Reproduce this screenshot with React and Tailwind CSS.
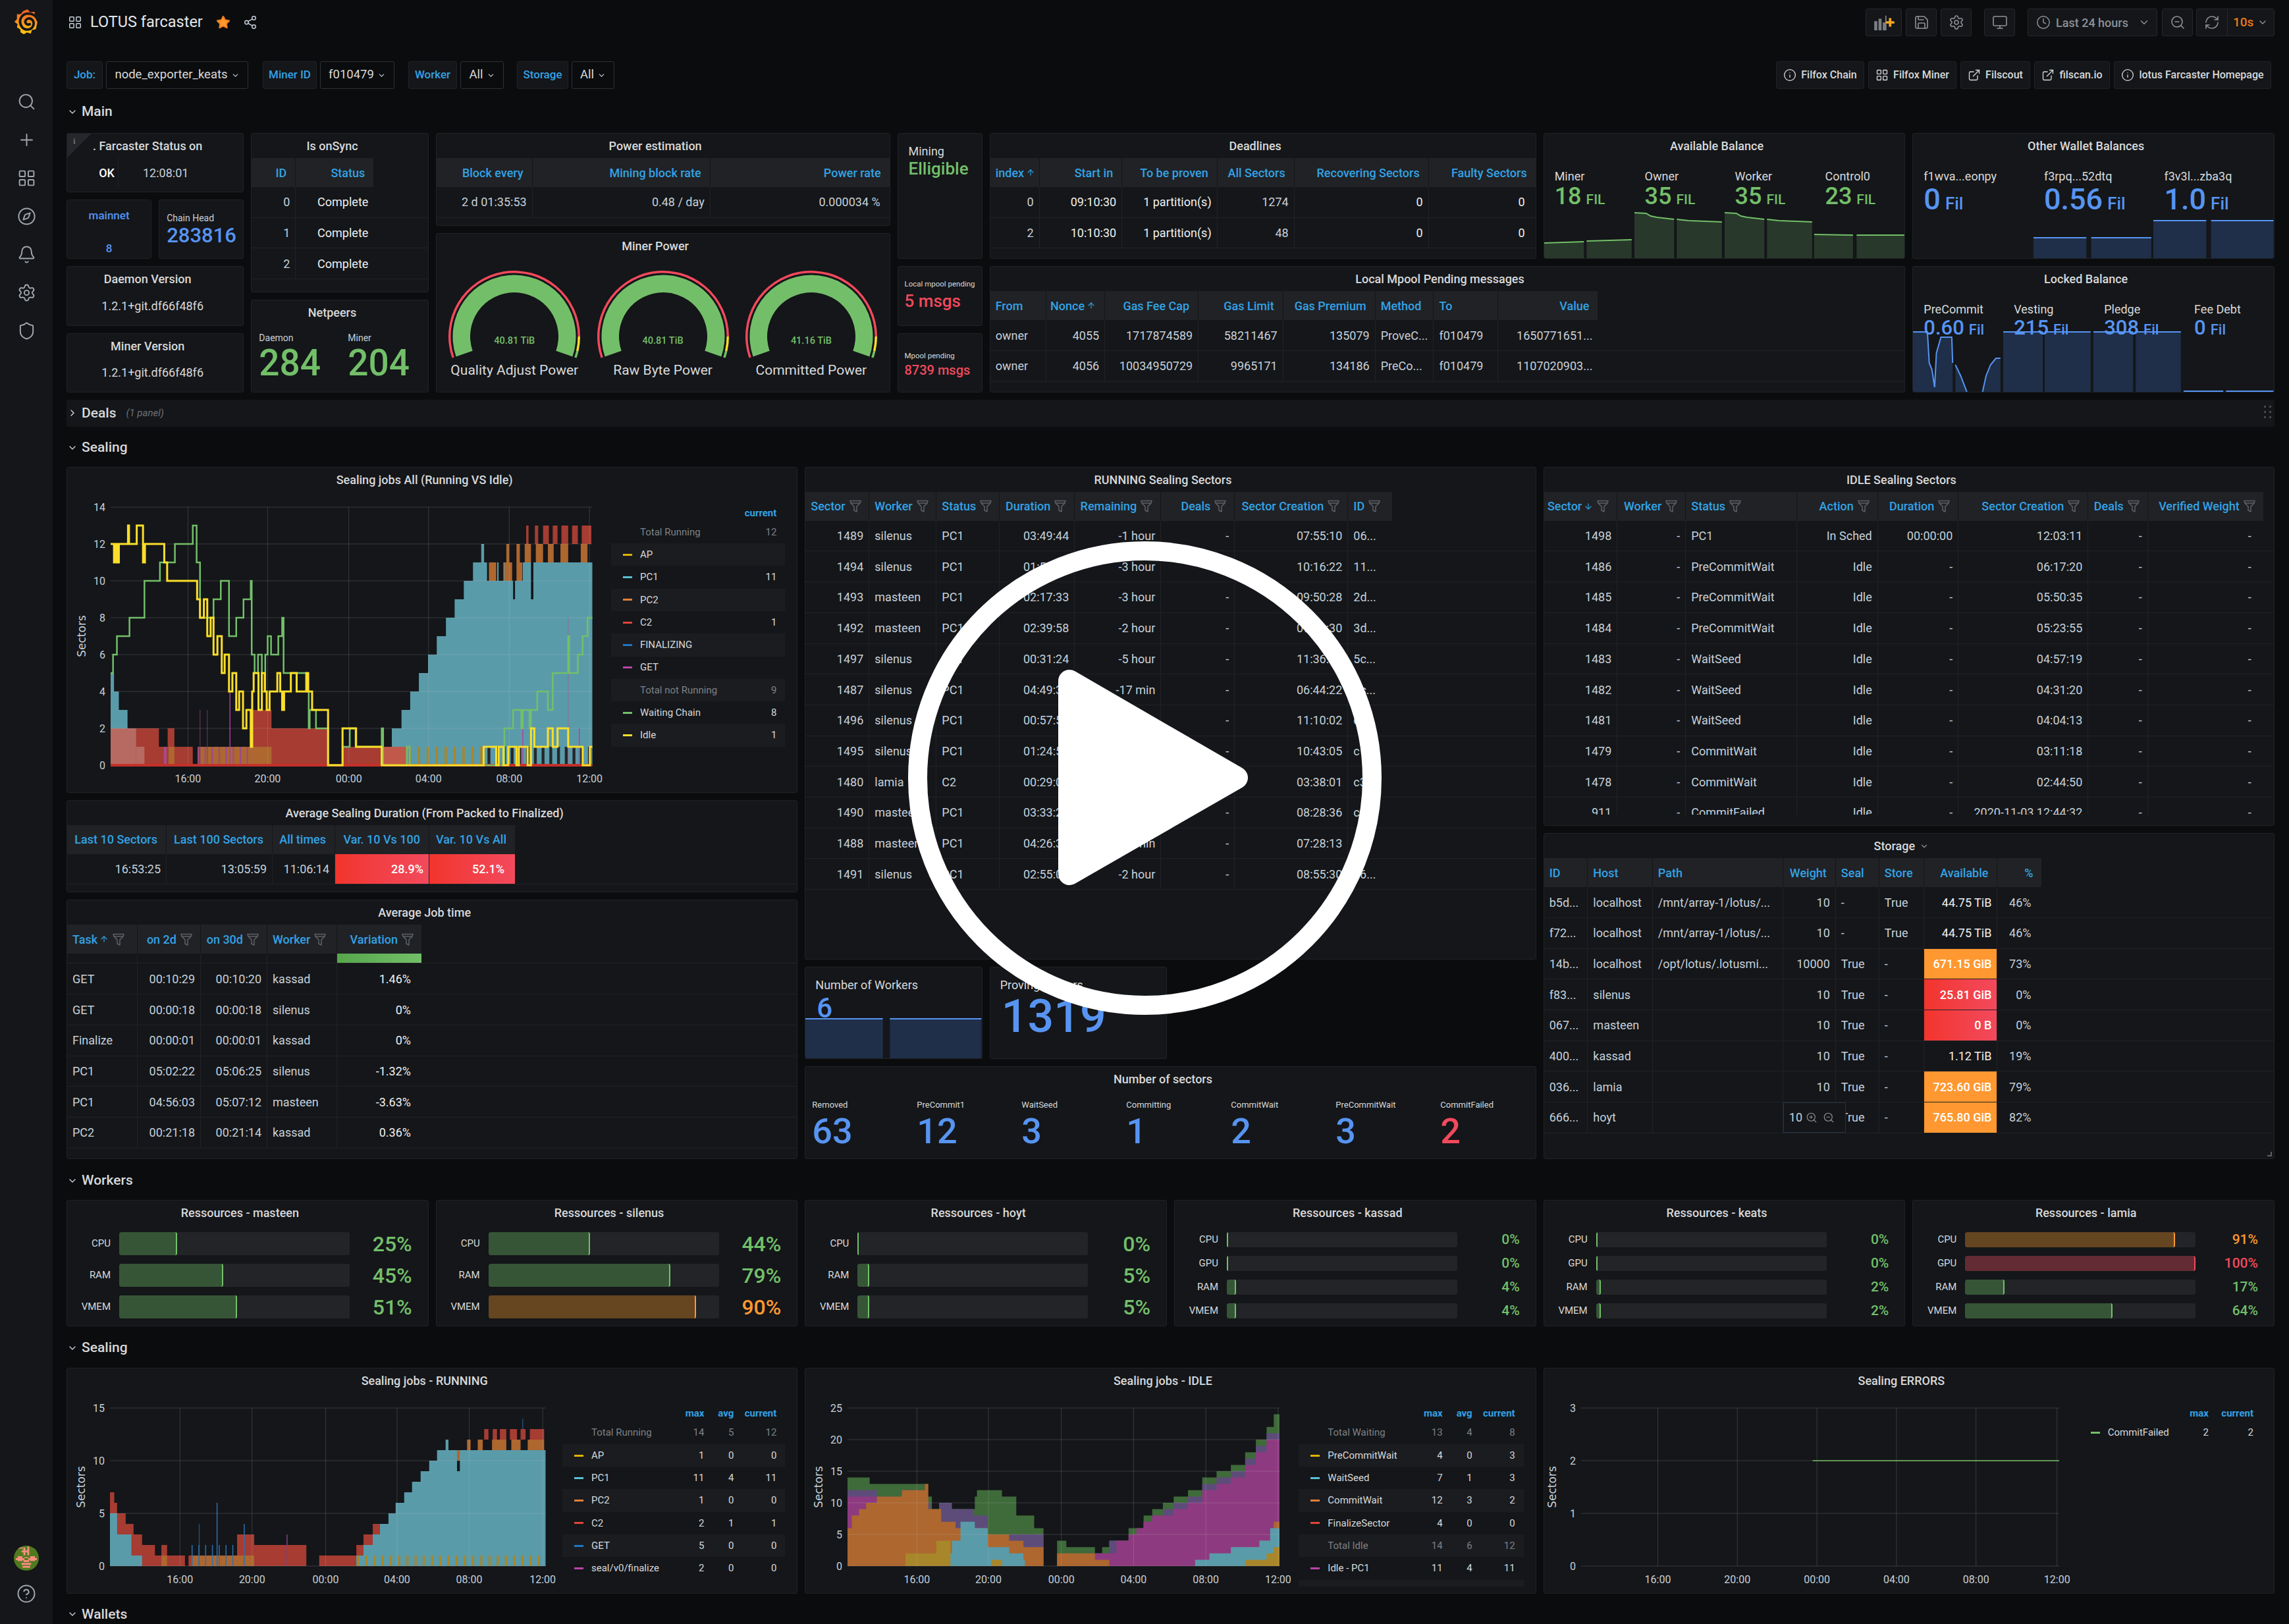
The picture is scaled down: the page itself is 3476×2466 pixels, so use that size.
import React from "react";
import { Search, Plus, LayoutGrid, Compass, Bell, Settings, Shield, CircleHelp, Star, Share2, Save, Monitor, Clock, ZoomOut, ZoomIn, RefreshCw, ChevronDown, ChevronRight, Info, ExternalLink, ArrowUp, ArrowDown } from "lucide-react";

const BLUE = "#5794f2", GREEN = "#73bf69", RED = "#f2495c", ORANGE = "#ff9830";

function Logo() {
  return (
    <svg width="40" height="42" viewBox="16 12 42 42">
      <defs>
        <linearGradient id="lg" x1="0" y1="0" x2="0" y2="1">
          <stop offset="0" stopColor="#f05a28" />
          <stop offset="1" stopColor="#fbca0a" />
        </linearGradient>
      </defs>
      <polygon fill="url(#lg)" points="39,13 43,18 50,17 51,23 56,27 55,33 53.5,39 52,45 46,46 44,52 38,50 33,53 28,50 27,45 22,42 23,37 18,33 22,29 22,21 28,21 32,16" />
      <path d="M56 32 C53 23 46 19.5 39 20 C31 20.5 26.5 27 27 33.5 C27.5 41 33 46 39.5 45.5 C45.5 45 49.5 40 48.5 34 C47.5 29 43 27 39.5 28 C36 29 34.5 32.5 36 35 C37.5 37.5 40.5 38 42.5 37" fill="none" stroke="#141619" strokeWidth="4" strokeLinecap="round" />
    </svg>
  );
}

function Avatar() {
  const blocks = [[4,0,2,2],[14,0,2,2],[10,1,2,8],[14,2,2,7],[6,1,4,1],[8,4,7,2],[1,1,2,2],[22,1,2,2],[4,10,5,5],[17,10,5,5],[9,12,2,2],[15,12,2,2],[11,11,4,1],[10,14,6,2],[2,12,4,2],[20,12,4,2],[8,17,10,2],[9,20,8,2]];
  return (
    <svg width="38" height="38" viewBox="0 0 26 26">
      <defs><clipPath id="av"><circle cx="13" cy="13" r="13" /></clipPath></defs>
      <g clipPath="url(#av)">
        <rect width="26" height="26" fill="#4f7a1e" />
        {blocks.map((b, i) => <rect key={i} x={b[0]} y={b[1] + 1} width={b[2]} height={b[3]} fill="#fb8e80" />)}
      </g>
    </svg>
  );
}

function Sidebar() {
  const icons = [Search, Plus, LayoutGrid, Compass, Bell, Settings, Shield];
  return (
    <div className="w-[80px] shrink-0 bg-[#141619] flex flex-col items-center h-full">
      <div className="h-[125px] w-full flex justify-center pt-[12px] items-start"><Logo /></div>
      {icons.map((I, i) => (
        <div key={i} className="h-[58px] flex items-center justify-center text-[#a2a6ad]"><I size={29} strokeWidth={1.6} /></div>
      ))}
      <div className="mt-auto flex flex-col items-center gap-[20px] pb-[31px]">
        <Avatar />
        <CircleHelp size={30} strokeWidth={1.6} className="text-[#a2a6ad]" />
      </div>
    </div>
  );
}

function TBtn({ className, children }) {
  return <div className={"h-[42px] bg-[#141619] border border-[#25272c] rounded-[3px] flex items-center justify-center text-[#8e9196] " + className}>{children}</div>;
}

function TopBar() {
  return (
    <div className="h-[68px] flex items-center shrink-0">
      <div className="flex items-center pl-[2px]">
        <LayoutGrid size={22} strokeWidth={1.6} className="text-[#c7d0d9]" />
        <span className="ml-[12px] text-[23.5px] text-[#e4e6e8]">LOTUS farcaster</span>
        <Star size={22} fill={ORANGE} stroke="#eb7b18" className="ml-[20px]" />
        <Share2 size={22} strokeWidth={1.6} className="ml-[19px] text-[#c7d0d9]" />
      </div>
      <div className="ml-auto flex items-center">
        <TBtn className="w-[55px]">
          <svg width="32" height="26" viewBox="0 0 34 28">
            <rect x="1" y="12" width="5" height="15" fill="#7b7e83" /><rect x="8" y="8" width="5" height="19" fill="#7b7e83" /><rect x="15" y="14" width="5" height="13" fill="#7b7e83" /><rect x="19" y="3" width="2" height="24" fill="#7b7e83" />
            <path d="M25 7h4v5h5v4h-5v5h-4v-5h-5v-4h5z" fill="#f5a623" />
          </svg>
        </TBtn>
        <TBtn className="w-[47px] ml-[6px]"><Save size={24} strokeWidth={1.6} /></TBtn>
        <TBtn className="w-[47px] ml-[6px]"><Settings size={24} strokeWidth={1.6} /></TBtn>
        <TBtn className="w-[47px] ml-[19px]"><Monitor size={24} strokeWidth={1.6} /></TBtn>
        <TBtn className="w-[197px] ml-[19px] text-[18px] font-medium justify-start pl-[12px]">
          <Clock size={22} strokeWidth={1.6} /><span className="ml-[8px]">Last 24 hours</span><ChevronDown size={18} className="ml-auto mr-[10px]" />
        </TBtn>
        <TBtn className="w-[47px] ml-[7px]"><ZoomOut size={24} strokeWidth={1.6} /></TBtn>
        <div className="ml-[5px] w-[119px] h-[42px] bg-[#141619] border border-[#25272c] rounded-[3px] flex items-center text-[#8e9196]">
          <div className="w-[47px] h-full flex items-center justify-center border-r border-[#25272c]"><RefreshCw size={24} strokeWidth={1.6} /></div>
          <span className="ml-[8px] text-[19px] font-medium text-[#eb7b18]">10s</span><ChevronDown size={16} className="ml-[6px]" />
        </div>
      </div>
    </div>
  );
}

function VarL({ w, children }) {
  return <div className={"h-[42px] bg-[#141619] border border-[#202226] rounded-[3px] flex items-center justify-center text-[#33a2e5] text-[17px] font-medium " + w}>{children}</div>;
}
function VarV({ w, children }) {
  return <div className={"h-[42px] ml-[5px] bg-[#0b0c0e] border border-[#2c3235] rounded-[3px] flex items-center justify-center text-[#d8d9da] text-[18.5px] gap-[5px] " + w}>{children}<ChevronDown size={13} className="text-[#c7d0d9]" /></div>;
}
function LinkBtn({ w, icon: I, children }) {
  return <div className={"h-[42px] ml-[6px] bg-[#141619] border border-[#202226] rounded-[3px] flex items-center justify-center gap-[7px] text-[16px] font-medium text-[#d8d9da] " + w}><I size={20} strokeWidth={1.6} />{children}</div>;
}
function Vars() {
  return (
    <div className="flex items-center h-[42px] mt-[25px] shrink-0">
      <VarL w="w-[55px]">Job:</VarL><VarV w="w-[216px]">node_exporter_keats</VarV>
      <VarL w="w-[82px] ml-[22px]">Miner ID</VarL><VarV w="w-[113px]">f010479</VarV>
      <VarL w="w-[74px] ml-[21px]">Worker</VarL><VarV w="w-[66px]">All</VarV>
      <VarL w="w-[78px] ml-[20px]">Storage</VarL><VarV w="w-[65px]">All</VarV>
      <div className="ml-auto flex items-center pr-[5px]">
        <LinkBtn w="w-[134px]" icon={Info}>Filfox Chain</LinkBtn>
        <LinkBtn w="w-[134px]" icon={LayoutGrid}>Filfox Miner</LinkBtn>
        <LinkBtn w="w-[106px]" icon={ExternalLink}>Filscout</LinkBtn>
        <LinkBtn w="w-[115px]" icon={ExternalLink}>filscan.io</LinkBtn>
        <LinkBtn w="w-[239px]" icon={Info}>lotus Farcaster Homepage</LinkBtn>
      </div>
    </div>
  );
}

function Section({ h, children }) {
  return (
    <div className={"flex items-center gap-[6px] pl-[1px] text-[21px] font-medium text-[#d8d9da] shrink-0 pt-[3px] " + h}>
      <ChevronDown size={16} strokeWidth={2} className="text-[#c7d0d9]" />{children}
    </div>
  );
}

function Panel({ pos, title, children, className = "" }) {
  return (
    <div className={"bg-[#141619] border border-[#202226] rounded-[3px] overflow-hidden flex flex-col relative min-w-0 " + pos + " " + className}>
      {title && <div className="h-[37px] shrink-0 flex items-center justify-center pr-[23px] text-[18px] font-medium text-[#d8d9da] whitespace-nowrap">{title}</div>}
      {children}
    </div>
  );
}

function Funnel() {
  return (
    <svg width="18" height="19" viewBox="0 0 18 19" className="shrink-0 ml-[6px]" fill="none" stroke="#5d6066" strokeWidth="1.5" strokeLinejoin="round">
      <path d="M1 1.5h16l-1 3.5-5 5v8l-4-2v-6L2 5z" /><path d="M2 5h14" />
    </svg>
  );
}

function Tbl({ cols, head, rows, filter, gauge, clip }) {
  const alignC = (a) => (a === "r" ? "justify-end" : "justify-start");
  const headPad = (a) => (a === "r" ? (filter ? "pl-[8px] pr-[12px]" : "pl-[8px] pr-[13px]") : "px-[8px]");
  return (
    <div className={"flex flex-col min-h-0 " + (clip ? "flex-1 mb-[16px] overflow-hidden" : "")}>
      <div className="flex h-[44px] shrink-0">
        {head.map((h, i) => (
          <div key={i} style={{ width: cols[i] }} className={"bg-[#202226] border-r border-[#141619] last:border-r-0 flex items-center text-[18px] font-medium text-[#33a2e5] whitespace-nowrap overflow-hidden shrink-0 " + headPad(h.a) + " " + alignC(h.a)}>
            {h.t}{h.s === "up" && <ArrowUp size={14} strokeWidth={2} className="ml-[3px] shrink-0" />}{h.s === "down" && <ArrowDown size={14} strokeWidth={2} className="ml-[3px] shrink-0" />}{filter && <Funnel />}
          </div>
        ))}
      </div>
      {gauge && (
        <div className="flex h-[15px] shrink-0 border-b border-[#202226]">
          {head.map((h, i) => (
            <div key={i} style={{ width: cols[i] }} className={"shrink-0 border-r border-[#202226] last:border-r-0 " + (i === head.length - 1 ? "bg-linear-to-r from-[#56a64b] to-[#73bf69]" : "")} />
          ))}
        </div>
      )}
      {rows.map((r, ri) => (
        <div key={ri} className="flex h-[46.7px] shrink-0 border-b border-[#202226]">
          {r.map((c, i) => {
            const o = typeof c === "string" ? { t: c } : c;
            const a = head[i].ca || head[i].a;
            const k = o.k === "hi" ? "text-[#f0f0f0]" : o.k === "red" ? "text-white font-medium bg-linear-to-r from-[#f2342b] to-[#f2495c]" : o.k === "or" ? "text-white font-medium bg-[#ff9830]" : "text-[#c7d0d9]";
            return (
              <div key={i} style={{ width: cols[i] }} className={"relative shrink-0 border-r border-[#202226] last:border-r-0 flex items-center pl-[8px] whitespace-nowrap text-[18px] " + (head[i].p || "pr-[8px]") + " " + alignC(a) + " " + k}>
                {o.hover ? (
                  <div className="absolute left-0 top-0 h-full w-[95px] z-10 bg-[#141619] border border-[#253247] flex items-center pl-[8px] gap-[5px] text-[#c7d0d9]">
                    {o.t}<ZoomIn size={18} strokeWidth={1.5} className="text-[#8e9196]" /><ZoomOut size={18} strokeWidth={1.5} className="ml-[3px] text-[#8e9196]" />
                  </div>
                ) : <span>{o.t}</span>}
              </div>
            );
          })}
        </div>
      ))}
    </div>
  );
}

const R = (t, s, p) => ({ t, a: "r", s, p });
const L = (t, s, ca) => ({ t, a: "l", s, ca });
const H = (t) => ({ t, k: "hi" });

function Spark({ h, blocks, c = "blue" }) {
  const fill = c === "blue" ? "#1f2f4a" : "#28392b";
  const line = c === "blue" ? BLUE : GREEN;
  return (
    <svg viewBox={`0 0 100 ${h}`} preserveAspectRatio="none" className="absolute left-0 bottom-0 w-full" style={{ height: h }}>
      {blocks.map((b, i) => (
        <g key={i}>
          <polygon fill={fill} points={`${b[0][0]},${h} ` + b.map((p) => `${p[0]},${h - p[1]}`).join(" ") + ` ${b[b.length - 1][0]},${h}`} />
          <polyline fill="none" stroke={line} strokeWidth="2" vectorEffect="non-scaling-stroke" points={b.map((p) => `${p[0]},${h - p[1]}`).join(" ")} />
        </g>
      ))}
    </svg>
  );
}

function Stat({ label, value, unit, vc, uc, vh, spark }) {
  return (
    <div className="flex-1 relative min-w-0 pt-[16px] pl-[16px]">
      {spark}
      <div className="relative h-[22px] flex items-center text-[18px] text-[#d8d9da] whitespace-nowrap">{label}</div>
      <div className={"relative flex items-baseline font-medium whitespace-nowrap " + vh + " " + vc}>{value}<span className={"ml-[7px] " + uc}>{unit}</span></div>
    </div>
  );
}

function Gauge({ label, value }) {
  const cx = 112, cy = 112;
  const pt = (r, a) => [cx + r * Math.cos((a * Math.PI) / 180), cy + r * Math.sin((a * Math.PI) / 180)];
  const arc = (r0, r1, a0, a1) => {
    const [x0, y0] = pt(r1, a0), [x1, y1] = pt(r1, a1), [x2, y2] = pt(r0, a1), [x3, y3] = pt(r0, a0);
    const lg = a1 - a0 > 180 ? 1 : 0;
    return `M${x0} ${y0}A${r1} ${r1} 0 ${lg} 1 ${x1} ${y1}L${x2} ${y2}A${r0} ${r0} 0 ${lg} 0 ${x3} ${y3}Z`;
  };
  return (
    <div className="flex-1 flex flex-col items-center min-w-0">
      <div className="relative w-[224px] h-[157px] shrink-0">
        <svg width="224" height="157" viewBox="0 0 224 157">
          <path d={arc(67, 93.5, 161, 379)} fill={GREEN} />
          <path d={arc(96.5, 100, 161, 360)} fill={RED} />
          <path d={arc(96.5, 100, 360, 373)} fill="#fade2a" />
          <path d={arc(96.5, 100, 373, 379)} fill={GREEN} />
        </svg>
        <div className="absolute left-0 right-0 top-[108px] text-center text-[14.5px] font-medium text-[#73bf69]">{value}</div>
      </div>
      <div className="text-[21px] text-[#d8d9da] whitespace-nowrap mt-[-9px]">{label}</div>
    </div>
  );
}

function Main() {
  return (
    <div className="grid grid-cols-24 auto-rows-[39.6px] gap-[11px] shrink-0">
      <Panel pos="col-start-1 col-span-2 row-start-1 row-span-2" title=". Farcaster Status on">
        <div className="absolute left-0 top-0 w-[36px] h-[37px] bg-[linear-gradient(135deg,#25272c_50%,transparent_50%)] text-[13px] text-[#8e9196] pl-[9px] pt-[1px] font-serif">i</div>
        <div className="flex h-[44px] items-center text-[18px]">
          <div className="w-[78px] h-full flex items-center justify-end pr-[5px] border-r border-[#202226] text-white font-medium">OK</div>
          <div className="flex-1 pl-[37px] text-[#c7d0d9]">12:08:01</div>
        </div>
      </Panel>
      <Panel pos="col-start-1 col-span-1 row-start-3 row-span-2" className="items-center text-[#5794f2] font-medium text-[17px]">
        <div className="mt-[11px]">mainnet</div>
        <div className="mt-[24px]">8</div>
      </Panel>
      <Panel pos="col-start-2 col-span-1 row-start-3 row-span-2" className="pl-[11px]">
        <div className="mt-[17px] text-[14px] text-[#c7d0d9] whitespace-nowrap">Chain Head</div>
        <div className="mt-[-2px] text-[31px] font-medium leading-[36px] text-[#5794f2]">283816</div>
      </Panel>
      <Panel pos="col-start-1 col-span-2 row-start-5 row-span-2" title="Daemon Version">
        <div className="h-[44px] flex items-center justify-center text-[18px] text-[#d8d9da] pr-[8px]">1.2.1+git.df66f48f6</div>
      </Panel>
      <Panel pos="col-start-1 col-span-2 row-start-7 row-span-2" title="Miner Version">
        <div className="h-[44px] flex items-center justify-center text-[18px] text-[#d8d9da] pr-[8px]">1.2.1+git.df66f48f6</div>
      </Panel>
      <Panel pos="col-start-3 col-span-2 row-start-1 row-span-5" title="Is onSync">
        <Tbl cols={[67, 118]} head={[R("ID"), R("Status")]} rows={[["0", H("Complete")], ["1", H("Complete")], ["2", H("Complete")]]} />
      </Panel>
      <Panel pos="col-start-3 col-span-2 row-start-6 row-span-3" title="Netpeers">
        <div className="flex pl-[11px] mt-[10px]">
          <div className="w-[135px]"><div className="text-[14px] leading-[20px] text-[#c7d0d9]">Daemon</div><div className="text-[55px] leading-[60px] font-medium text-[#73bf69] mt-[-2px]">284</div></div>
          <div><div className="text-[14px] leading-[20px] text-[#c7d0d9]">Miner</div><div className="text-[55px] leading-[60px] font-medium text-[#73bf69] mt-[-2px]">204</div></div>
        </div>
      </Panel>
      <Panel pos="col-start-5 col-span-5 row-start-1 row-span-3" title="Power estimation">
        <Tbl cols={[146, 270, 272]} head={[R("Block every"), R("Mining block rate"), R("Power rate", null, "pr-[14px]")]} rows={[["2 d 01:35:53", "0.48 / day", "0.000034 %"]]} />
      </Panel>
      <Panel pos="col-start-5 col-span-5 row-start-4 row-span-5" title="Miner Power">
        <div className="flex px-[6px] pt-[7px]">
          <Gauge label="Quality Adjust Power" value="40.81 TiB" />
          <Gauge label="Raw Byte Power" value="40.81 TiB" />
          <Gauge label="Committed Power" value="41.16 TiB" />
        </div>
      </Panel>
      <Panel pos="col-start-10 col-span-1 row-start-1 row-span-4" className="pl-[16px] pt-[15px]">
        <div className="text-[18px] leading-[24px] text-[#d8d9da]">Mining</div>
        <div className="text-[26px] leading-[28px] font-medium text-[#73bf69]">Elligible</div>
      </Panel>
      <Panel pos="col-start-10 col-span-1 row-start-5 row-span-2" className="pl-[10px] pt-[18px]">
        <div className="text-[11.5px] leading-[16px] text-[#d8d9da] whitespace-nowrap">Local mpool pending</div>
        <div className="text-[26px] leading-[34px] font-medium text-[#f2495c] whitespace-nowrap mt-[1px]">5 msgs</div>
      </Panel>
      <Panel pos="col-start-10 col-span-1 row-start-7 row-span-2" className="pl-[10px] pt-[25px]">
        <div className="text-[11.5px] leading-[16px] text-[#d8d9da] whitespace-nowrap">Mpool pending</div>
        <div className="text-[20px] leading-[28px] font-medium text-[#f2495c] whitespace-nowrap">8739 msgs</div>
      </Panel>
      <Panel pos="col-start-11 col-span-6 row-start-1 row-span-4" title="Deadlines">
        <Tbl cols={[75, 125.5, 144.5, 117, 204, 162]} head={[L("index", "up", "r"), R("Start in"), R("To be proven"), R("All Sectors"), R("Recovering Sectors"), R("Faulty Sectors", null, "pr-[16px]")]}
          rows={[["0", H("09:10:30"), H("1 partition(s)"), "1274", H("0"), H("0")], ["2", H("10:10:30"), H("1 partition(s)"), "48", H("0"), H("0")]]} />
      </Panel>
      <Panel pos="col-start-11 col-span-10 row-start-5 row-span-4" title="Local Mpool Pending messages">
        <Tbl cols={[85.7, 88.8, 142, 128.5, 140, 88.8, 98, 151]} head={[L("From"), R("Nonce", "up"), R("Gas Fee Cap"), R("Gas Limit"), R("Gas Premium"), L("Method"), L("To"), R("Value")]}
          rows={[["owner", "4055", "1717874589", "58211467", "135079", "ProveC...", "f010479", "1650771651..."], ["owner", "4056", "10034950729", "9965171", "134186", "PreCo...", "f010479", "1107020903..."]]} />
      </Panel>
      <Panel pos="col-start-17 col-span-4 row-start-1 row-span-4" title="Available Balance">
        <div className="flex flex-1 -mb-[1px]">
          {[
            ["Miner", "18", <Spark key="a" c="green" h={30} blocks={[[[0, 24], [44, 26]], [[47, 27], [97, 29]]]} />],
            ["Owner", "35", <Spark key="b" c="green" h={72} blocks={[[[0, 70], [13, 69], [18, 65], [25, 63], [44, 60]], [[47, 60], [60, 58], [97, 56]]]} />],
            ["Worker", "35", <Spark key="c" c="green" h={72} blocks={[[[0, 70], [13, 69], [18, 65], [25, 63], [44, 60]], [[47, 60], [60, 58], [97, 56]]]} />],
            ["Control0", "23", <Spark key="d" c="green" h={40} blocks={[[[0, 37], [43, 36]], [[47, 36], [100, 36]]]} />],
          ].map((s) => <Stat key={s[0]} label={s[0]} value={s[1]} unit="FIL" vc="text-[#73bf69] text-[36px] leading-[40px]" uc="text-[21px]" vh="h-[40px]" spark={s[2]} />)}
        </div>
      </Panel>
      <Panel pos="col-start-21 col-span-4 row-start-1 row-span-4" title="Other Wallet Balances">
        <div className="flex flex-1 -mb-[1px]">
          {[
            ["f1wva...eonpy", "0", null],
            ["f3rpq...52dtq", "0.56", <Spark key="a" h={33} blocks={[[[0, 32], [44, 32]], [[48, 32], [98, 32]]]} />],
            ["f3v3l...zba3q", "1.0", <Spark key="b" h={60} blocks={[[[0, 58], [44, 58]], [[48, 58], [100, 58]]]} />],
          ].map((s) => <Stat key={s[0]} label={s[0]} value={s[1]} unit="Fil" vc="text-[#5794f2] text-[45px] leading-[50px]" uc="text-[26px]" vh="h-[50px]" spark={s[2]} />)}
        </div>
      </Panel>
      <Panel pos="col-start-21 col-span-4 row-start-5 row-span-4" title="Locked Balance">
        <div className="flex flex-1 -mb-[1px]">
          {[
            ["PreCommit", "0.60", <Spark key="a" h={94} blocks={[[[0, 92], [16, 92], [18, 45], [21, 35], [24, 8], [26, 60], [31, 84], [43, 84], [44, 45]], [[47, 42], [53, 25], [60, 0], [77, 0], [81, 25], [86, 42], [92, 52], [97, 52]]]} />],
            ["Vesting", "215", <Spark key="b" h={94} blocks={[[[0, 92], [44, 92]], [[46, 92], [97, 92]]]} />],
            ["Pledge", "308", <Spark key="c" h={94} blocks={[[[0, 92], [44, 92]], [[47, 92], [97, 92]]]} />],
            ["Fee Debt", "0", <Spark key="d" h={4} blocks={[[[0, 2], [44, 2]], [[47, 2], [100, 2]]]} />],
          ].map((s) => <Stat key={s[0]} label={s[0]} value={s[1]} unit="Fil" vc="text-[#5794f2] text-[31px] leading-[36px]" uc="text-[22px]" vh="h-[36px]" spark={s[2]} />)}
        </div>
      </Panel>
    </div>
  );
}

function DealsBar() {
  return (
    <div className="mt-[11px] h-[41px] bg-[#141619] rounded-[2px] flex items-center pl-[1px] pr-[4px] shrink-0 text-[#d8d9da]">
      <ChevronRight size={16} strokeWidth={2} />
      <span className="ml-[6px] text-[21px] font-medium">Deals</span>
      <span className="ml-[15px] text-[15px] italic text-[#6e7278]">(1 panel)</span>
      <svg width="12" height="22" viewBox="0 0 12 22" className="ml-auto" fill="#44474c">
        <rect x="0" y="0" width="3" height="3" /><rect x="8" y="0" width="3" height="3" /><rect x="0" y="8" width="3" height="3" /><rect x="8" y="8" width="3" height="3" /><rect x="0" y="16" width="3" height="3" /><rect x="8" y="16" width="3" height="3" />
      </svg>
    </div>
  );
}

const rs = (list, v0, v1, c) => list.map((x) => ({ r: [x[0], x[1], v0, v1], c }));
const stripes = (a, b, d, w) => {
  const out = [];
  for (let x = a; x < b; x += d) out.push([x, x + w]);
  return out;
};

function Chart({ w, h, l, t, pw, ph, zx0, zx1, ymax, yticks, xgrid, layers, lines = [], bottomRed }) {
  const X = (z) => l + ((z - zx0) / (zx1 - zx0)) * pw;
  const Y = (v) => t + ph - (v / ymax) * ph;
  const steps = (arr) => {
    const p = [];
    arr.forEach(([x, v], i) => {
      if (i > 0) p.push(`${X(x)},${Y(arr[i - 1][1])}`);
      p.push(`${X(x)},${Y(v)}`);
    });
    return p;
  };
  const grid = (
    <g stroke="#c8c8c8" strokeOpacity="0.2" strokeWidth="1">
      {yticks.map((v) => <line key={v} x1={l} x2={l + pw} y1={Y(v)} y2={Y(v)} />)}
      {xgrid.map((g) => <line key={g[1]} x1={X(g[0])} x2={X(g[0])} y1={t} y2={t + ph} />)}
    </g>
  );
  return (
    <svg width={w} height={h} viewBox={`0 0 ${w} ${h}`} className="shrink-0">
      {layers.map((a, i) => {
        if (a.r) return <rect key={i} x={X(a.r[0])} width={Math.max(1, X(a.r[1]) - X(a.r[0]))} y={Y(a.r[3])} height={Y(a.r[2]) - Y(a.r[3])} fill={a.c} />;
        if (a.v) return <line key={i} x1={X(a.v[0])} x2={X(a.v[0])} y1={Y(a.v[1])} y2={Y(a.v[2] || 0)} stroke={a.c} strokeWidth="1.5" strokeOpacity={a.o || 1} />;
        const s = steps(a.a);
        return <polygon key={i} fill={a.c} points={`${X(a.a[0][0])},${Y(0)} ${s.join(" ")} ${X(a.a[a.a.length - 1][0])},${Y(0)}`} />;
      })}
      {grid}
      {bottomRed && <line x1={l} x2={l + pw} y1={Y(0)} y2={Y(0)} stroke="#c4302a" strokeWidth="4" />}
      {lines.map((a, i) => <polyline key={i} fill="none" stroke={a.c} strokeWidth={a.w || 2.5} points={steps(a.p).join(" ")} />)}
      <g fill="#c7d0d9" fontFamily="Roboto" fontSize="16">
        {yticks.map((v) => <text key={v} x={l - 8} y={Y(v) + 6} textAnchor="end">{v}</text>)}
        {xgrid.map((g) => <text key={g[1]} x={X(g[0])} y={t + ph + 26} textAnchor="middle">{g[1]}</text>)}
      </g>
      <text transform={`translate(${l - 38},${t + ph / 2}) rotate(-90)`} textAnchor="middle" fill="#c7d0d9" fontFamily="DejaVu Sans" fontSize="17">Sectors</text>
    </svg>
  );
}

function Legend({ heads, widths, rows, pr = 13, sliver }) {
  return (
    <div className="flex-1 min-w-0 mr-[18px] mt-[20px] overflow-hidden text-[15px]">
      <div className="flex h-[24px] items-center justify-end text-[15px] font-bold text-[#33a2e5]" style={{ paddingRight: pr }}>
        {heads.map((x, i) => <div key={i} style={{ width: widths[i] }} className="text-right">{x}</div>)}
      </div>
      {rows.map((r, i) => (
        <div key={i} style={{ paddingRight: pr }} className={"flex h-[34.3px] items-center " + (i % 2 === 1 ? "bg-[#1b1c20] " : "") + (r.c ? "text-[#d8d9da]" : "text-[#7e8186]")}>
          <div className="w-[44px] shrink-0 pl-[18px]">{r.c && <div className="w-[14px] h-[3px]" style={{ background: r.c }} />}</div>
          <div className="flex-1 whitespace-nowrap">{r.n}</div>
          {r.v.map((x, j) => <div key={j} style={{ width: widths[j] }} className="text-right">{x}</div>)}
        </div>
      ))}
      {sliver && <div className="h-[10px] bg-[#1b1c20]" />}
    </div>
  );
}

const C_CY = "#5a9baa", C_RD = "#a63c32", C_OR = "#ad672f", C_BR = "#a8862a", C_MG = "#8e3a80", C_GN = "#3f6a3a", C_PU = "#5d4c7a";

function AllChart() {
  const layers = [
    ...rs([[965, 970], [983, 990], [1000, 1012], [1020, 1030], [1038, 1052], [1060, 1072], [1080, 1100]], 12, 13, C_RD),
    ...rs([[924, 930], [945, 952], [962, 975], [985, 1000], [1010, 1022], [1036, 1052], [1078, 1092]], 11, 12, C_OR),
    ...rs([[888, 903], [920, 936], [945, 957]], 10, 11, C_OR),
    { a: [[105, 5], [112, 4], [122, 3], [140, 0], [687, 2], [707, 3], [725, 4], [743, 5], [762, 6], [780, 7], [799, 8], [817, 9], [836, 10], [855, 11], [872, 12], [878, 11], [884, 10], [905, 11], [908, 10], [918, 11], [920, 10], [938, 9], [942, 10], [958, 11], [975, 9], [980, 11], [1102, 11]], c: C_CY },
    { a: [[158, 2], [205, 1], [223, 2], [237, 1], [275, 0], [285, 1], [395, 3], [438, 2], [555, 0], [585, 1], [667, 0], [667, 0]], c: C_RD },
    ...rs([[105, 158]], 0, 2, "#b76a62"), ...rs([[158, 175]], 0, 1, "#b76a62"),
    ...rs([[667, 718]], 0, 1, "#c0594a"),
    ...rs([[225, 237], [290, 438]], 0, 1, C_OR),
    ...rs(stripes(285, 400, 14.5, 3), 0, 1, "#9a4b8c"),
    ...rs([[215, 221]], 0, 1, "#a84a8a"),
    ...rs(stripes(722, 880, 18.5, 5), 0, 1, C_BR),
    ...rs(stripes(885, 1098, 16, 6), 0, 1, "#26272a"),
    { v: [352, 4], c: "#a040a0" }, { v: [290, 3], c: "#7a3a7a", o: 0.6 }, { v: [305, 3], c: "#7a3a7a", o: 0.6 }, { v: [1052, 8], c: "#a85a80", o: 0.5 }, { v: [1075, 2], c: "#b040a0" }, { v: [958, 2], c: "#b040a0" },
  ];
  const yellow = [[105, 12], [112, 11], [116, 12], [118, 11], [122, 12], [141, 13], [143, 12], [159, 13], [172, 11], [176, 12], [216, 11], [222, 10], [284, 9], [290, 8], [298, 9], [305, 7], [312, 8], [318, 6], [326, 7], [335, 5], [341, 6], [350, 4], [357, 5], [365, 3], [371, 4], [379, 2], [386, 3], [395, 1], [398, 4], [401, 5], [411, 3], [418, 5], [424, 4], [428, 3], [434, 4], [450, 5], [456, 4], [460, 3], [464, 4], [478, 5], [490, 4], [510, 5], [514, 4], [522, 3], [555, 0], [585, 2], [613, 1], [666, 0], [877, 1], [903, 0], [908, 1], [918, 0], [928, 1], [945, 0], [950, 1], [968, 0], [975, 2], [982, 1], [1010, 2], [1020, 1], [1030, 2], [1052, 1], [1082, 0], [1097, 1], [1102, 1]];
  const green = [[105, 5], [110, 6], [118, 7], [144, 8], [175, 10], [207, 11], [238, 12], [275, 13], [283, 11], [290, 8], [318, 9], [333, 10], [350, 7], [365, 8], [380, 9], [395, 10], [397, 6], [403, 5], [410, 6], [418, 4], [425, 6], [430, 7], [437, 6], [452, 7], [460, 8], [463, 5], [510, 4], [515, 2], [517, 3], [530, 2], [555, 0], [585, 1], [600, 2], [612, 1], [666, 2], [669, 0], [718, 1], [724, 0], [920, 2], [938, 3], [955, 2], [958, 3], [972, 2], [975, 3], [988, 4], [1010, 3], [1020, 5], [1052, 7], [1054, 5], [1072, 6], [1082, 7], [1092, 8], [1102, 8]];
  return (
    <Chart w={826} h={456} l={66} t={23} pw={731.5} ph={392} zx0={105} zx1={1102} ymax={14} yticks={[0, 2, 4, 6, 8, 10, 12, 14]}
      xgrid={[[265, "16:00"], [430, "20:00"], [598, "00:00"], [763, "04:00"], [930, "08:00"], [1096, "12:00"]]}
      layers={layers} lines={[{ p: green, c: GREEN }, { p: yellow, c: "#fade2a", w: 3 }]} bottomRed />
  );
}

function RunningChart() {
  const layers = [
    ...rs([[594, 600], [606, 612], [616, 625], [630, 640], [645, 652], [658, 678]], 12, 13, C_RD),
    ...rs([[570, 575], [585, 592], [605, 625], [632, 645], [655, 678]], 11, 12, C_OR),
    ...rs([[547, 565], [578, 592]], 10, 11, C_OR),
    { a: [[70, 5], [80, 3], [100, 1], [115, 0], [425, 2], [438, 3], [448, 4], [460, 5], [470, 6], [482, 7], [493, 8], [505, 9], [517, 10], [528, 11], [540, 12], [544, 11], [556, 9], [560, 11], [680, 11]], c: C_CY },
    { a: [[70, 7], [76, 6], [80, 5], [92, 4], [103, 3], [115, 2], [133, 1], [142, 2], [150, 1], [175, 0], [180, 1], [248, 3], [272, 2], [345, 0], [363, 1], [415, 2], [425, 3], [438, 4], [448, 0], [448, 0]], c: C_RD },
    { a: [[70, 5], [80, 3], [100, 1], [115, 0], [115, 0]], c: C_CY },
    { a: [[415, 1], [425, 2], [438, 3], [448, 4], [460, 0], [460, 0]], c: C_CY },
    ...rs([[142, 150], [184, 272]], 0, 1, C_OR),
    ...rs(stripes(416, 678, 11.5, 3), 0, 1, C_BR),
    ...stripes(185, 245, 9.5, 1).map((x) => ({ v: [x[0], 2], c: "#2f6fb0" })),
    { v: [220, 6], c: "#2f6fb0" }, { v: [258, 4], c: "#2f6fb0" }, { v: [195, 4], c: "#2f6fb0", o: 0.6 }, { v: [318, 3], c: "#804080" }, { v: [648, 14, 13], c: "#2f5fa0", o: 0.7 },
  ];
  return (
    <Chart w={752} h={304} l={65} t={23} pw={661.5} ph={240} zx0={70} zx1={680} ymax={15} yticks={[0, 5, 10, 15]}
      xgrid={[[168, "16:00"], [269, "20:00"], [372, "00:00"], [472, "04:00"], [573, "08:00"], [676, "12:00"]]} layers={layers} />
  );
}

function IdleChart() {
  const layers = [
    { a: [[1104, 14], [1135, 13], [1212, 11], [1222, 9], [1282, 11], [1285, 12], [1320, 11], [1340, 8], [1365, 6], [1378, 0], [1397, 4], [1410, 3], [1450, 2], [1460, 3], [1470, 4], [1497, 6], [1518, 8], [1530, 9], [1545, 10], [1560, 11], [1580, 12], [1600, 14], [1620, 15], [1640, 16], [1660, 18], [1675, 20], [1690, 22], [1700, 24], [1708, 24]], c: C_GN },
    { a: [[1104, 12], [1145, 11], [1180, 12], [1212, 10], [1220, 8], [1232, 10], [1250, 9], [1280, 8], [1300, 5], [1378, 0], [1450, 2], [1470, 4], [1497, 5], [1518, 7], [1530, 8], [1545, 9], [1560, 10], [1580, 11], [1600, 13], [1620, 14], [1640, 15], [1660, 17], [1675, 19], [1690, 21], [1708, 23]], c: C_PU },
    { a: [[1104, 11], [1145, 9], [1180, 0], [1440, 2], [1480, 4], [1497, 5], [1508, 6], [1518, 7], [1530, 8], [1545, 8], [1560, 9], [1580, 10], [1600, 12], [1620, 13], [1640, 14], [1660, 16], [1675, 18], [1690, 20], [1708, 22]], c: C_MG },
    { a: [[1104, 6], [1110, 8], [1120, 9], [1130, 10], [1145, 11], [1180, 12], [1212, 13], [1217, 9], [1235, 7], [1255, 6], [1282, 6], [1300, 5], [1330, 4], [1350, 3], [1378, 0], [1397, 2], [1410, 2], [1450, 1], [1470, 0], [1640, 1], [1660, 3], [1680, 4], [1695, 5], [1700, 7], [1708, 8]], c: C_OR },
    { a: [[1228, 2], [1250, 4], [1262, 7], [1282, 6], [1300, 3], [1330, 2], [1350, 1], [1352, 0], [1590, 1], [1610, 2], [1640, 3], [1660, 3], [1680, 4], [1695, 6], [1708, 6]], c: C_CY },
    { a: [[1185, 2], [1228, 4], [1248, 0], [1305, 1], [1320, 0], [1620, 0], [1660, 1], [1690, 2], [1700, 3], [1708, 3]], c: C_BR },
  ];
  return (
    <Chart w={749} h={304} l={64} t={23} pw={656} ph={240} zx0={1104} zx1={1708} ymax={25} yticks={[0, 5, 10, 15, 20, 25]}
      xgrid={[[1201, "16:00"], [1301, "20:00"], [1403, "00:00"], [1504, "04:00"], [1605, "08:00"], [1706, "12:00"]]} layers={layers} />
  );
}

function ErrChart() {
  return (
    <Chart w={812} h={304} l={56} t={23} pw={726} ph={240} zx0={579} zx1={1246} ymax={3} yticks={[0, 1, 2, 3]}
      xgrid={[[686, "16:00"], [797, "20:00"], [908, "00:00"], [1019, "04:00"], [1130, "08:00"], [1243, "12:00"]]}
      layers={[]} lines={[{ p: [[902, 2], [1246, 2]], c: GREEN, w: 1.5 }]} />
  );
}

const funnelRows = [
  ["1489", "silenus", "PC1", "03:49:44", "-1 hour", "-", "07:55:10", "06..."],
  ["1494", "silenus", "PC1", "01:51:39", "-3 hour", "-", "10:16:22", "11..."],
  ["1493", "masteen", "PC1", "02:17:33", "-3 hour", "-", "09:50:28", "2d..."],
  ["1492", "masteen", "PC1", "02:39:58", "-2 hour", "-", "09:28:30", "3d..."],
  ["1497", "silenus", "PC1", "00:31:24", "-5 hour", "-", "11:36:37", "5c..."],
  ["1487", "silenus", "PC1", "04:49:39", "-17 min", "-", "06:44:22", "6c..."],
  ["1496", "silenus", "PC1", "00:57:59", "-4 hour", "-", "11:10:02", "c..."],
  ["1495", "silenus", "PC1", "01:24:56", "-3 hour", "-", "10:43:05", "c1..."],
  ["1480", "lamia", "C2", "00:29:00", "-1 hour", "-", "03:38:01", "c3..."],
  ["1490", "masteen", "PC1", "03:33:25", "-1 hour", "-", "08:28:36", "c..."],
  ["1488", "masteen", "PC1", "04:26:39", "-50 min", "-", "07:28:13", "..."],
  ["1491", "silenus", "PC1", "02:55:01", "-2 hour", "-", "08:55:30", "a6..."],
];
const idleRows = [
  ["1498", "-", "PC1", "In Sched", "00:00:00", "12:03:11", "-", "-"],
  ["1486", "-", "PreCommitWait", "Idle", "-", "06:17:20", "-", "-"],
  ["1485", "-", "PreCommitWait", "Idle", "-", "05:50:35", "-", "-"],
  ["1484", "-", "PreCommitWait", "Idle", "-", "05:23:55", "-", "-"],
  ["1483", "-", "WaitSeed", "Idle", "-", "04:57:19", "-", "-"],
  ["1482", "-", "WaitSeed", "Idle", "-", "04:31:20", "-", "-"],
  ["1481", "-", "WaitSeed", "Idle", "-", "04:04:13", "-", "-"],
  ["1479", "-", "CommitWait", "Idle", "-", "03:11:18", "-", "-"],
  ["1478", "-", "CommitWait", "Idle", "-", "02:44:50", "-", "-"],
  ["911", "-", "CommitFailed", "Idle", "-", "2020-11-03 12:44:32", "-", "-"],
];
const storRows = [
  ["b5d...", "localhost", "/mnt/array-1/lotus/...", "10", "-", "True", H("44.75 TiB"), "46%"],
  ["f72...", "localhost", "/mnt/array-1/lotus/...", "10", "-", "True", H("44.75 TiB"), "46%"],
  ["14b...", "localhost", "/opt/lotus/.lotusmi...", "10000", "True", "-", { t: "671.15 GiB", k: "or" }, "73%"],
  ["f83...", "silenus", "", "10", "True", "-", { t: "25.81 GiB", k: "red" }, "0%"],
  ["067...", "masteen", "", "10", "True", "-", { t: "0 B", k: "red" }, "0%"],
  ["400...", "kassad", "", "10", "True", "-", H("1.12 TiB"), "19%"],
  ["036...", "lamia", "", "10", "True", "-", { t: "723.60 GiB", k: "or" }, "79%"],
  ["666...", "hoyt", "", { t: "10", hover: true }, "True", "-", { t: "765.80 GiB", k: "or" }, "82%"],
];
const jobRows = [
  ["GET", "00:10:29", "00:10:20", "kassad", H("1.46%")],
  ["GET", "00:00:18", "00:00:18", "silenus", H("0%")],
  ["Finalize", "00:00:01", "00:00:01", "kassad", H("0%")],
  ["PC1", "05:02:22", "05:06:25", "silenus", H("-1.32%")],
  ["PC1", "04:56:03", "05:07:12", "masteen", H("-3.63%")],
  ["PC2", "00:21:18", "00:21:14", "kassad", H("0.36%")],
];
const sectors = [["Removed", "63"], ["PreCommit1", "12"], ["WaitSeed", "3"], ["Committing", "1"], ["CommitWait", "2"], ["PreCommitWait", "3"], ["CommitFailed", "2"]];

function Sealing() {
  return (
    <div className="grid grid-cols-24 auto-rows-[39.6px] gap-[11px] shrink-0">
      <Panel pos="col-start-1 col-span-8 row-start-1 row-span-10" title="Sealing jobs All (Running VS Idle)">
        <div className="flex">
          <AllChart />
          <Legend heads={["current"]} widths={[60]} rows={[
            { n: "Total Running", v: ["12"] }, { n: "AP", c: "#e0b400", v: [""] }, { n: "PC1", c: "#5ac0d4", v: ["11"] }, { n: "PC2", c: "#e0813a", v: [""] }, { n: "C2", c: "#e0443a", v: ["1"] },
            { n: "FINALIZING", c: "#1f78c1", v: [""] }, { n: "GET", c: "#ba43a9", v: [""] }, { n: "Total not Running", v: ["9"] }, { n: "Waiting Chain", c: GREEN, v: ["8"] }, { n: "Idle", c: "#fade2a", v: ["1"] },
          ]} />
        </div>
      </Panel>
      <Panel pos="col-start-1 col-span-8 row-start-11 row-span-3" title="Average Sealing Duration (From Packed to Finalized)">
        <Tbl cols={[151, 161, 95, 143, 130]} head={[R("Last 10 Sectors"), R("Last 100 Sectors"), R("All times"), R("Var. 10 Vs 100"), R("Var. 10 Vs All", null, "pr-[16px]")]} rows={[["16:53:25", "13:05:59", "11:06:14", { t: "28.9%", k: "red" }, { t: "52.1%", k: "red" }]]} />
      </Panel>
      <Panel pos="col-start-1 col-span-8 row-start-14 row-span-8" title="Average Job time">
        <Tbl filter gauge cols={[107, 96, 101, 106, 128]} head={[L("Task", "up"), R("on 2d"), R("on 30d"), L("Worker"), R("Variation", null, "pr-[16px]")]} rows={jobRows} />
      </Panel>
      <Panel pos="col-start-9 col-span-8 row-start-1 row-span-15" title="RUNNING Sealing Sectors">
        <Tbl filter cols={[97, 102, 96, 114, 131, 112, 172, 67]} head={[L("Sector", null, "r"), L("Worker"), L("Status"), R("Duration"), R("Remaining"), R("Deals"), R("Sector Creation"), L("ID")]} rows={funnelRows} />
      </Panel>
      <Panel pos="col-start-9 col-span-2 row-start-16 row-span-3">
        <Spark h={62} blocks={[[[0, 60], [44, 60]], [[48, 60], [100, 60]]]} />
        <div className="relative pl-[15px] pt-[15px] text-[18px] leading-[24px] text-[#d8d9da] whitespace-nowrap">Number of Workers</div>
        <div className="relative pl-[17px] text-[42px] leading-[48px] font-medium text-[#5794f2] mt-[-1px]">6</div>
      </Panel>
      <Panel pos="col-start-11 col-span-2 row-start-16 row-span-3">
        <div className="pl-[15px] pt-[15px] text-[18px] leading-[24px] text-[#d8d9da] whitespace-nowrap">Proving Sectors</div>
        <div className="pl-[17px] text-[70px] leading-[78px] font-medium text-[#5794f2] mt-[-4px]">1319</div>
      </Panel>
      <Panel pos="col-start-9 col-span-8 row-start-19 row-span-3" title="Number of sectors">
        <div className="flex pl-[10px] pt-[12px]">
          {sectors.map((s, i) => (
            <div key={s[0]} className="w-[159px] shrink-0">
              <div className="text-[13px] leading-[18px] text-[#d8d9da] whitespace-nowrap">{s[0]}</div>
              <div className={"text-[54px] leading-[58px] font-medium mt-[2px] " + (i === 6 ? "text-[#f2495c]" : "text-[#5794f2]")}>{s[1]}</div>
            </div>
          ))}
        </div>
      </Panel>
      <Panel pos="col-start-17 col-span-8 row-start-1 row-span-11" title="IDLE Sealing Sectors">
        <Tbl clip filter cols={[111.6, 104, 169, 122.5, 122.5, 197, 90.5, 175]} head={[R("Sector", "down"), R("Worker"), L("Status"), R("Action"), R("Duration"), R("Sector Creation"), R("Deals"), R("Verified Weight", null, "pr-[18px]")]} rows={idleRows} />
      </Panel>
      <Panel pos="col-start-17 col-span-8 row-start-12 row-span-10" title={<span className="flex items-center gap-[7px]">Storage<ChevronDown size={14} className="text-[#8e9196]" /></span>}>
        <Tbl cols={[66.7, 98.5, 198, 80, 66, 68, 111.6, 67]} head={[L("ID"), L("Host"), L("Path"), R("Weight"), L("Seal"), L("Store"), R("Available"), R("%", null, "pr-[16px]")]} rows={storRows} />
        <div className="absolute right-[3px] bottom-[3px] w-[7px] h-[7px] border-r-2 border-b-2 border-[#5d6066]" />
      </Panel>
    </div>
  );
}

function BarRow({ name, pct, big }) {
  const col = pct >= 100 ? "red" : pct >= 80 ? "or" : "gr";
  const fill = col === "red" ? "bg-[#632b33] border-[#f2495c]" : col === "or" ? "bg-[#664521] border-[#ff9830]" : "bg-[#365536] border-[#73bf69]";
  const tc = col === "red" ? "text-[#f2495c]" : col === "or" ? "text-[#ff9830]" : "text-[#73bf69]";
  return (
    <div className={"flex items-center " + (big ? "h-[35px]" : "h-[23px]")}>
      <div className="w-[66px] text-right text-[15px] text-[#d8d9da] shrink-0">{name}</div>
      <div className={"ml-[13px] w-[350px] shrink-0 bg-[#222428] rounded-[3px] overflow-hidden " + (big ? "h-[35px]" : "h-[23px]")}>
        <div className={"h-full rounded-[3px] border-r-2 " + fill} style={{ width: `${Math.max(pct, 0.4)}%` }} />
      </div>
      <div className={"flex-1 text-right pr-[24px] font-medium leading-none " + tc + " " + (big ? "text-[32px]" : "text-[21px]")}>{pct}%</div>
    </div>
  );
}

function Res({ pos, title, rows }) {
  const big = rows.length === 3;
  return (
    <Panel pos={pos} title={title}>
      <div className="flex flex-col gap-[13px] mt-[11px]">
        {rows.map((r) => <BarRow key={r[0]} name={r[0]} pct={r[1]} big={big} />)}
      </div>
    </Panel>
  );
}

function Workers() {
  return (
    <div className="grid grid-cols-24 auto-rows-[39.6px] gap-[11px] shrink-0">
      <Res pos="col-span-4 row-span-4" title="Ressources - masteen" rows={[["CPU", 25], ["RAM", 45], ["VMEM", 51]]} />
      <Res pos="col-span-4 row-span-4" title="Ressources - silenus" rows={[["CPU", 44], ["RAM", 79], ["VMEM", 90]]} />
      <Res pos="col-span-4 row-span-4" title="Ressources - hoyt" rows={[["CPU", 0], ["RAM", 5], ["VMEM", 5]]} />
      <Res pos="col-span-4 row-span-4" title="Ressources - kassad" rows={[["CPU", 0], ["GPU", 0], ["RAM", 4], ["VMEM", 4]]} />
      <Res pos="col-span-4 row-span-4" title="Ressources - keats" rows={[["CPU", 0], ["GPU", 0], ["RAM", 2], ["VMEM", 2]]} />
      <Res pos="col-span-4 row-span-4" title="Ressources - lamia" rows={[["CPU", 91], ["GPU", 100], ["RAM", 17], ["VMEM", 64]]} />
    </div>
  );
}

function Sealing2() {
  return (
    <div className="grid grid-cols-24 auto-rows-[39.6px] gap-[11px] shrink-0">
      <Panel pos="col-span-8 row-span-7" title="Sealing jobs - RUNNING">
        <div className="flex">
          <RunningChart />
          <Legend heads={["max", "avg", "current"]} widths={[45, 45, 65]} rows={[
            { n: "Total Running", v: ["14", "5", "12"] }, { n: "AP", c: "#e0b400", v: ["1", "0", "0"] }, { n: "PC1", c: "#5ac0d4", v: ["11", "4", "11"] }, { n: "PC2", c: "#e0813a", v: ["1", "0", "0"] },
            { n: "C2", c: "#e0443a", v: ["2", "1", "1"] }, { n: "GET", c: "#1f78c1", v: ["5", "0", "0"] }, { n: "seal/v0/finalize", c: "#ba43a9", v: ["2", "0", "0"] },
          ]} />
        </div>
      </Panel>
      <Panel pos="col-span-8 row-span-7" title="Sealing jobs - IDLE">
        <div className="flex">
          <IdleChart />
          <Legend sliver heads={["max", "avg", "current"]} widths={[45, 45, 65]} rows={[
            { n: "Total Waiting", v: ["13", "4", "8"] }, { n: "PreCommitWait", c: "#e0b400", v: ["4", "0", "3"] }, { n: "WaitSeed", c: "#5ac0d4", v: ["7", "1", "3"] }, { n: "CommitWait", c: "#e0813a", v: ["12", "3", "2"] },
            { n: "FinalizeSector", c: "#e0443a", v: ["4", "0", "0"] }, { n: "Total Idle", v: ["14", "6", "12"] }, { n: "Idle - PC1", c: "#ba43a9", v: ["11", "4", "11"] },
          ]} />
        </div>
      </Panel>
      <Panel pos="col-span-8 row-span-7" title="Sealing ERRORS">
        <div className="flex">
          <ErrChart />
          <Legend pr={13} heads={["max", "current"]} widths={[50, 68]} rows={[{ n: "CommitFailed", c: GREEN, v: ["2", "2"] }]} />
        </div>
      </Panel>
    </div>
  );
}

function PlayOverlay() {
  return (
    <svg width="719" height="719" viewBox="0 0 719 719" className="absolute left-[1379px] top-[822px] z-20 pointer-events-none">
      <circle cx="359.5" cy="359.5" r="345" fill="none" stroke="#fff" strokeWidth="29" />
      <polygon points="245,212 499,359 245,505" fill="#fff" stroke="#fff" strokeWidth="34" strokeLinejoin="round" />
    </svg>
  );
}

export default function App() {
  return (
    <div className="relative flex w-[3476px] h-[2466px] overflow-hidden bg-[#0b0c0e] font-['Roboto',sans-serif]">
      <Sidebar />
      <div className="flex-1 min-w-0 flex flex-col pl-[21px] pr-[22px]">
        <TopBar />
        <Vars />
        <Section h="h-[67px]">Main</Section>
        <Main />
        <DealsBar />
        <Section h="h-[61px]">Sealing</Section>
        <Sealing />
        <Section h="h-[62px]">Workers</Section>
        <Workers />
        <Section h="h-[63px]">Sealing</Section>
        <Sealing2 />
        <Section h="h-[60px]">Wallets</Section>
      </div>
      <PlayOverlay />
    </div>
  );
}
